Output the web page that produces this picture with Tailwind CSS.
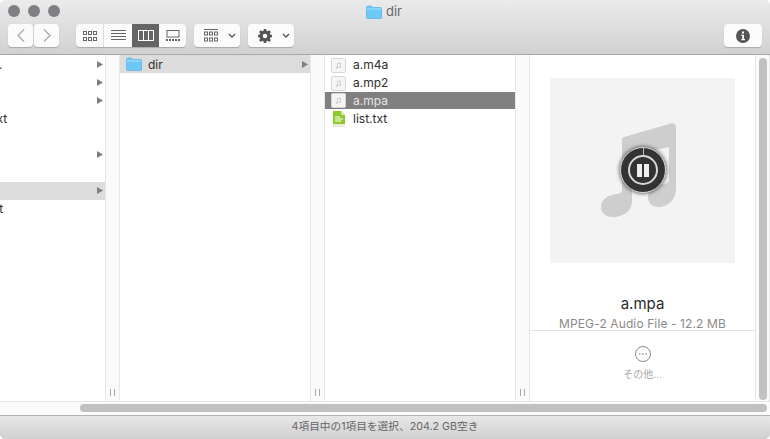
<!DOCTYPE html>
<html lang="en">
<head>
<meta charset="UTF-8" />
<title>dir</title>
<script src="https://cdn.jsdelivr.net/npm/@tailwindcss/browser@4"></script>
</head>
<body class="w-[770px] h-[439px] overflow-hidden bg-white font-['Inter','Noto_Sans_CJK_JP',sans-serif] text-[12px] text-[#2e2e2e]">
<div class="w-[770px] h-[439px] flex flex-col rounded-[5px] overflow-hidden">

  <!-- toolbar -->
  <header class="h-[55px] shrink-0 relative border-b border-[#a8a8a8] bg-gradient-to-b from-[#ebebeb] to-[#d1d1d1]">
    <div class="flex gap-[8px] pl-[8px] pt-[5px] h-[24px]">
      <span class="w-[12px] h-[12px] rounded-full bg-[#7f7f84]"></span>
      <span class="w-[12px] h-[12px] rounded-full bg-[#7f7f84]"></span>
      <span class="w-[12px] h-[12px] rounded-full bg-[#7f7f84]"></span>
    </div>
    <div class="absolute left-[366px] top-[3px] flex items-center gap-[4px] h-[17px] text-[13px] text-[#666]">
      <svg width="16" height="14" viewBox="0 0 16 14"><path d="M.5 2.500a1.500 1.500 0 0 1 1.500-1.500h3.500l1.500 1.500h7.500a1.500 1.500 0 0 1 1.500 1.500v8a1.500 1.500 0 0 1-1.500 1.500H2a1.500 1.500 0 0 1-1.500-1.500z" fill="#6cc8f8" stroke="#4da9e0" stroke-width=".6"/><path d="M.6 4h14.800" stroke="#a6e0fc" stroke-width="1"/></svg>
      <span>dir</span>
    </div>
    <div class="flex pl-[8px] h-[23px]">
      <div class="flex gap-[1px]">
        <button class="w-[25px] h-[23px] rounded-[4px] bg-[#fbfbfb] shadow-[0_1px_1px_#a9a9a9] flex items-center justify-center">
          <svg width="8" height="13" viewBox="0 0 8 13"><path d="M7 .5 1 6.500l6 6" fill="none" stroke="#a8a8a8" stroke-width="1.200"/></svg>
        </button>
        <button class="w-[25px] h-[23px] rounded-[4px] bg-[#fbfbfb] shadow-[0_1px_1px_#a9a9a9] flex items-center justify-center">
          <svg width="8" height="13" viewBox="0 0 8 13"><path d="M1 .5l6 6-6 6" fill="none" stroke="#a8a8a8" stroke-width="1.200"/></svg>
        </button>
      </div>
      <div class="ml-[17px] w-[110px] h-[23px] rounded-[4px] bg-[#fbfbfb] shadow-[0_1px_1px_#a9a9a9] flex overflow-hidden">
        <div class="w-[28px] border-r border-[#dcdcdc] flex items-center justify-center">
          <svg width="14" height="10" viewBox="0 0 14 10" fill="none" stroke="#666" stroke-width="1"><rect x=".5" y=".5" width="3" height="3"/><rect x="5.500" y=".5" width="3" height="3"/><rect x="10.500" y=".5" width="3" height="3"/><rect x=".5" y="6.500" width="3" height="3"/><rect x="5.500" y="6.500" width="3" height="3"/><rect x="10.500" y="6.500" width="3" height="3"/></svg>
        </div>
        <div class="w-[28px] flex items-center justify-center">
          <svg width="15" height="11" viewBox="0 0 15 11" stroke="#666" stroke-width="1"><path d="M0 .5h15M0 3.500h15M0 6.500h15M0 9.500h15"/></svg>
        </div>
        <div class="w-[27px] bg-[#656565] flex items-center justify-center">
          <svg width="16" height="11" viewBox="0 0 16 11" fill="none" stroke="#fff" stroke-width="1"><rect x=".5" y=".5" width="15" height="10"/><path d="M5.500 0v11M10.500 0v11"/></svg>
        </div>
        <div class="w-[27px] flex items-center justify-center">
          <svg width="14" height="11" viewBox="0 0 14 11"><rect x="1" y=".5" width="12" height="6.500" fill="none" stroke="#666"/><path d="M0 10h14" stroke="#666" stroke-width="2" stroke-dasharray="2 1"/></svg>
        </div>
      </div>
      <button class="ml-[8px] w-[46px] h-[23px] rounded-[4px] bg-[#fbfbfb] shadow-[0_1px_1px_#a9a9a9] flex items-center pl-[10px] gap-[10px]">
        <svg width="14" height="13" viewBox="0 0 14 13" fill="none" stroke="#666" stroke-width="1"><path d="M0 .5h14"/><rect x=".5" y="3" width="3" height="3"/><rect x="5.500" y="3" width="3" height="3"/><rect x="10.500" y="3" width="3" height="3"/><rect x=".5" y="9" width="3" height="3"/><rect x="5.500" y="9" width="3" height="3"/><rect x="10.500" y="9" width="3" height="3"/></svg>
        <svg width="8" height="5" viewBox="0 0 8 5"><path d="M1 1l3 3 3-3" fill="none" stroke="#555" stroke-width="1.300"/></svg>
      </button>
      <button class="ml-[8px] w-[46px] h-[23px] rounded-[4px] bg-[#fbfbfb] shadow-[0_1px_1px_#a9a9a9] flex items-center pl-[10px] gap-[10px]">
        <svg width="14" height="14" viewBox="0 0 14 14"><path fill="#555" fill-rule="evenodd" d="M5.800 0h2.400l.3 1.800 1.100.5L11.200 1.200l1.700 1.700-1.100 1.600.5 1.100 1.700.3v2.300l-1.700.3-.5 1.100 1.100 1.600-1.700 1.700-1.600-1.100-1.100.5-.3 1.700H5.800l-.3-1.700-1.100-.5-1.600 1.100-1.700-1.700 1.100-1.600-.5-1.100L0 8.200V5.900l1.700-.3.5-1.100-1.100-1.600 1.700-1.700 1.600 1.100 1.100-.5zM7 4.800a2.200 2.200 0 1 0 0 4.400 2.200 2.200 0 0 0 0-4.400z"/></svg>
        <svg width="8" height="5" viewBox="0 0 8 5"><path d="M1 1l3 3 3-3" fill="none" stroke="#555" stroke-width="1.300"/></svg>
      </button>
      <button class="ml-auto mr-[8px] w-[38px] h-[23px] rounded-[4px] bg-[#fbfbfb] shadow-[0_1px_1px_#a9a9a9] flex items-center justify-center">
        <svg width="14" height="14" viewBox="0 0 14 14"><circle cx="7" cy="7" r="7" fill="#555"/><rect x="6" y="2.500" width="2" height="2" fill="#fff"/><path d="M5.300 5.800H8v4.300h1v1.200H5.300v-1.200h1V7H5.300z" fill="#fff"/></svg>
      </button>
    </div>
  </header>

  <!-- browser area -->
  <div class="h-[346px] shrink-0 flex">
    <!-- first column, names cut off at the left -->
    <div class="w-[105px] shrink-0 overflow-hidden pt-[1px]">
      <div class="h-[18px] flex items-center"><span class="-ml-[1px] grow">.</span><svg class="mr-[2px] mb-[2px]" width="6" height="7" viewBox="0 0 6 7"><path d="M0 0l6 3.500-6 3.500z" fill="#7f7f7f"/></svg></div>
      <div class="h-[18px] flex items-center justify-end"><svg class="mr-[2px] mb-[2px]" width="6" height="7" viewBox="0 0 6 7"><path d="M0 0l6 3.500-6 3.500z" fill="#7f7f7f"/></svg></div>
      <div class="h-[18px] flex items-center justify-end"><svg class="mr-[2px] mb-[2px]" width="6" height="7" viewBox="0 0 6 7"><path d="M0 0l6 3.500-6 3.500z" fill="#7f7f7f"/></svg></div>
      <div class="h-[18px] flex items-center"><span class="-ml-[27px]">list.txt</span></div>
      <div class="h-[18px]"></div>
      <div class="h-[18px] flex items-center justify-end"><svg class="mr-[2px] mb-[2px]" width="6" height="7" viewBox="0 0 6 7"><path d="M0 0l6 3.500-6 3.500z" fill="#7f7f7f"/></svg></div>
      <div class="h-[18px]"></div>
      <div class="h-[18px] flex items-center justify-end bg-[#dcdcdc]"><svg class="mr-[2px] mb-[1px]" width="6" height="7" viewBox="0 0 6 7"><path d="M0 0l6 3.500-6 3.500z" fill="#7f7f7f"/></svg></div>
      <div class="h-[18px] flex items-center"><span class="-ml-[31px]">list.txt</span></div>
    </div>
    <div class="w-[15px] shrink-0 bg-[#fafafa] border-x border-[#e8e8e8] flex items-end justify-center gap-[3px] pb-[5px]">
      <span class="w-px h-[7px] bg-[#a8a8a8]"></span><span class="w-px h-[7px] bg-[#a8a8a8]"></span>
    </div>

    <!-- second column -->
    <div class="w-[190px] shrink-0">
      <div class="h-[18px] flex items-center bg-[#dcdcdc] pl-[6px]">
        <svg width="16" height="14" viewBox="0 0 16 14"><path d="M.5 2.500a1.500 1.500 0 0 1 1.500-1.500h3.500l1.500 1.500h7.500a1.500 1.500 0 0 1 1.500 1.500v8a1.500 1.500 0 0 1-1.500 1.500H2a1.500 1.500 0 0 1-1.500-1.500z" fill="#6cc8f8" stroke="#4da9e0" stroke-width=".6"/><path d="M.6 4h14.800" stroke="#a6e0fc" stroke-width="1"/></svg>
        <span class="ml-[6px] grow pt-[2px]">dir</span>
        <svg class="mr-[2px]" width="6" height="7" viewBox="0 0 6 7"><path d="M0 0l6 3.500-6 3.500z" fill="#7f7f7f"/></svg>
      </div>
    </div>
    <div class="w-[15px] shrink-0 bg-[#fafafa] border-x border-[#e8e8e8] flex items-end justify-center gap-[3px] pb-[5px]">
      <span class="w-px h-[7px] bg-[#a8a8a8]"></span><span class="w-px h-[7px] bg-[#a8a8a8]"></span>
    </div>

    <!-- third column -->
    <div class="w-[190px] shrink-0 pt-[1px]">
      <div class="h-[18px] flex items-center pl-[6px] gap-[7px]">
        <svg width="15" height="15" viewBox="0 0 15 15"><rect x=".5" y=".5" width="14" height="14" rx="1" fill="#f5f5f5" stroke="#d6d6d6"/><path d="M6.500 10V5.500l3-.6V9" fill="none" stroke="#cfcfcf"/><circle cx="5.500" cy="10" r="1" fill="#cfcfcf"/><circle cx="8.500" cy="9.200" r="1" fill="#cfcfcf"/></svg>
        <span>a.m4a</span>
      </div>
      <div class="h-[18px] flex items-center pl-[6px] gap-[7px]">
        <svg width="15" height="15" viewBox="0 0 15 15"><rect x=".5" y=".5" width="14" height="14" rx="1" fill="#f5f5f5" stroke="#d6d6d6"/><path d="M6.500 10V5.500l3-.6V9" fill="none" stroke="#cfcfcf"/><circle cx="5.500" cy="10" r="1" fill="#cfcfcf"/><circle cx="8.500" cy="9.200" r="1" fill="#cfcfcf"/></svg>
        <span>a.mp2</span>
      </div>
      <div class="h-[17px] mb-[1px] flex items-center pl-[6px] gap-[7px] bg-[#808080] text-[#e6e6e6]">
        <svg width="15" height="15" viewBox="0 0 15 15"><rect x=".5" y=".5" width="14" height="14" rx="1" fill="#f5f5f5" stroke="#d6d6d6"/><path d="M6.500 10V5.500l3-.6V9" fill="none" stroke="#cfcfcf"/><circle cx="5.500" cy="10" r="1" fill="#cfcfcf"/><circle cx="8.500" cy="9.200" r="1" fill="#cfcfcf"/></svg>
        <span>a.mpa</span>
      </div>
      <div class="h-[18px] flex items-center pl-[8px] gap-[8px]">
        <svg width="12" height="16" viewBox="0 0 12 16"><path d="M0 0h8l4 4v12H0z" fill="#8fc92f"/><path d="M8 0l4 4H8z" fill="#d6ec9f"/><path d="M0 13h12v3H0z" fill="#e9edd8"/><path d="M2 6h5M2 8h8M2 10h6" stroke="#fff" stroke-width="1"/></svg>
        <span>list.txt</span>
      </div>
    </div>
    <div class="w-[15px] shrink-0 bg-[#fafafa] border-x border-[#e8e8e8] flex items-end justify-center gap-[3px] pb-[5px]">
      <span class="w-px h-[7px] bg-[#a8a8a8]"></span><span class="w-px h-[7px] bg-[#a8a8a8]"></span>
    </div>

    <!-- preview -->
    <section class="w-[225px] shrink-0 flex flex-col items-center">
      <div class="relative w-[185px] h-[185px] mt-[23px] bg-[#f3f3f3]">
        <svg class="absolute left-[51px] top-[45px]" width="75" height="94" viewBox="0 0 75 94">
          <path fill="#cecece" d="M23 14 70 .5c3-.8 5 .6 5 3.500V66c0 10-7 17-16 18-8 .6-12-4-12-10 0-7 6-11 12-12l6-1.500c2-.5 3-2 3-4V24L31 32v46c0 9-7 15-17 16C5 94.600 0 90 0 84c0-7 6-11 13-12.500l5-1c2-.5 3-2 3-4V17c0-1.500.8-2.500 2-3z"/>
        </svg>
        <div class="absolute left-[70px] top-[69px] w-[46px] h-[46px] rounded-full bg-[#333] border border-[#dcdcdc] shadow-[0_0_4px_#333] flex items-center justify-center">
          <span class="absolute left-[22px] top-0 w-px h-[7px] bg-[#bbb]"></span>
          <div class="w-[30px] h-[30px] rounded-full border-2 border-[#d8d8d8] flex items-center justify-center gap-[2px]">
            <span class="w-[5px] h-[13px] bg-[#eee]"></span><span class="w-[5px] h-[13px] bg-[#eee]"></span>
          </div>
        </div>
      </div>
      <div class="mt-[31px] h-[20px] leading-[20px] text-[15px] text-[#2a2a2a]">a.mpa</div>
      <div class="mt-[2px] h-[14px] leading-[16px] text-[12px] tracking-[0.11px] text-[#8a8a8a] overflow-hidden">MPEG-2 Audio File - 12.2 MB</div>
      <div class="w-full border-t border-[#e5e5e5] flex flex-col items-center pt-[15px]">
        <svg width="16" height="16" viewBox="0 0 16 16"><circle cx="8" cy="8" r="7.500" fill="none" stroke="#8a8a8a"/><circle cx="4.800" cy="8" r=".8" fill="#777"/><circle cx="8" cy="8" r=".8" fill="#777"/><circle cx="11.200" cy="8" r=".8" fill="#777"/></svg>
        <span class="mt-[5px] text-[10px] leading-[14px] text-[#a8a8a8]">その他...</span>
      </div>
    </section>

    <!-- vertical scrollbar -->
    <div class="w-[15px] shrink-0 bg-[#fafafa] border-x border-[#e8e8e8] pl-[3px] pt-[3px]">
      <div class="w-[8px] h-[342px] rounded-full bg-[#c1c1c1]"></div>
    </div>
  </div>

  <!-- horizontal scrollbar -->
  <div class="h-[14px] shrink-0 bg-[#fafafa] border-t border-[#e8e8e8] pl-[80px] pt-[2px]">
    <div class="w-[687px] h-[8px] rounded-full bg-[#c1c1c1]"></div>
  </div>

  <!-- status bar -->
  <footer class="grow border-t border-[#b3b3b3] bg-gradient-to-b from-[#e8e8e8] to-[#d0d0d0] flex items-center justify-center text-[10.700px] text-[#666]">4項目中の1項目を選択、204.2 GB空き</footer>
</div>
</body>
</html>
